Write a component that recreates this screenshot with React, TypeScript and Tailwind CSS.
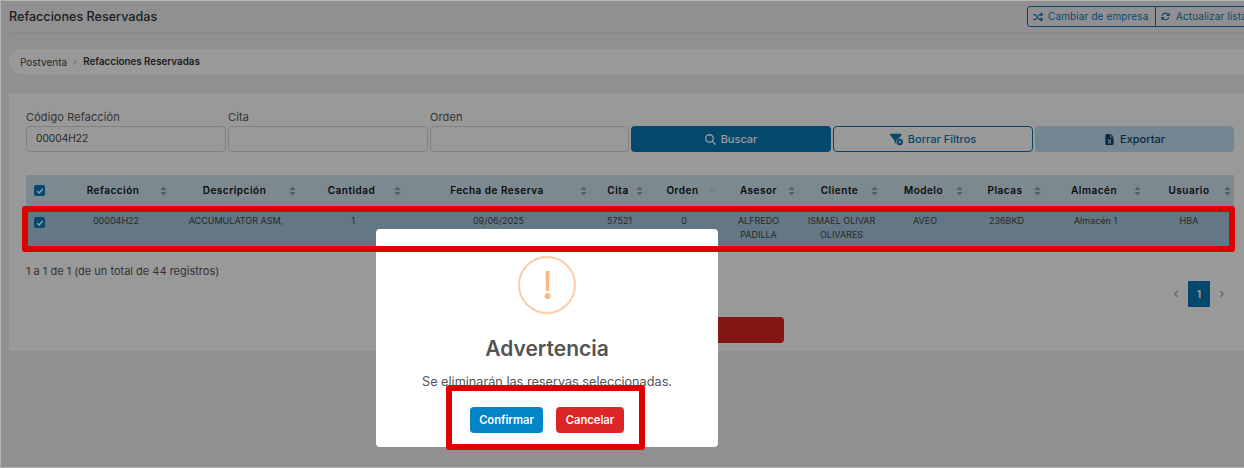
import { ChevronRight, ChevronUp, ChevronLeft } from "lucide-react";
import { FaArrowsRotate, FaFileExcel, FaFilterCircleXmark, FaMagnifyingGlass, FaShuffle } from "react-icons/fa6";

const gridCols = "grid grid-cols-[30px_114px_129px_105px_186px_56px_73px_79px_83px_85px_78px_100px_90px]";

const headers = [
  "Refacción",
  "Descripción",
  "Cantidad",
  "Fecha de Reserva",
  "Cita",
  "Orden",
  "Asesor",
  "Cliente",
  "Modelo",
  "Placas",
  "Almacén",
  "Usuario",
];

function SortIcon() {
  return (
    <svg width="7" height="10" viewBox="0 0 7 10" className="absolute right-[3px] top-[11px] fill-[#8a9aa5]">
      <path d="M3.5 0.5 6.5 4H0.5Z" />
      <path d="M3.5 9.5 0.5 6H6.5Z" />
    </svg>
  );
}

function Check({ className = "" }: { className?: string }) {
  return (
    <span className={`flex h-[11px] w-[11px] items-center justify-center rounded-[2px] bg-[#0878b8] ${className}`}>
      <svg width="8" height="8" viewBox="0 0 8 8" fill="none" stroke="white" strokeWidth="1.5">
        <path d="M1.2 4.2 3.2 6 6.8 2" />
      </svg>
    </span>
  );
}

function Field({ label, value, width = "w-[200px]" }: { label: string; value?: string; width?: string }) {
  return (
    <div className={width}>
      <p className="text-[11px] leading-[15px] text-[#555] tracking-[0.1px]">{label}</p>
      <div className="mt-[1px] flex h-[26px] items-center rounded-[4px] border border-[#d5d8dc] px-[9px] text-[10.2px] text-[#444]">
        {value}
      </div>
    </div>
  );
}

export default function App() {
  return (
    <div className="relative h-[468px] w-[1244px] overflow-hidden bg-[#f0f1f3] font-['Inter',sans-serif]">
      {/* Header */}
      <div className="ml-[9px] flex h-[33px] items-center justify-between border-b border-[#e2e4e7] pt-[1px]">
        <h1 className="mt-[2px] text-[12.6px] font-medium text-[#333]">Refacciones Reservadas</h1>
        <div className="-mr-[40px] flex h-[21px] w-[257px] rounded-[3px] border border-[#0878b8] text-[10px] tracking-[0.12px] text-[#0878b8]">
          <span className="flex w-[128px] items-center gap-[5px] border-r border-[#0878b8] pl-[5px] whitespace-nowrap">
            <FaShuffle size={10} />
            Cambiar de empresa
          </span>
          <span className="flex items-center gap-[6px] pl-[5px] whitespace-nowrap">
            <FaArrowsRotate size={9} />
            Actualizar lista
          </span>
        </div>
      </div>

      {/* Breadcrumb */}
      <div className="ml-[9px] mt-[16px] flex h-[25px] items-center gap-[3px] rounded-l-full bg-white pl-[11px] pt-[1px] text-[10px] text-[#444]">
        Postventa
        <ChevronRight size={10} className="text-[#999]" />
        <b className="text-[9.8px] font-semibold text-[#333]">Refacciones Reservadas</b>
      </div>

      {/* Card */}
      <div className="ml-[9px] mt-[19px] h-[258px] bg-white pl-[17px] pt-[17px]">
        <div className="flex items-end gap-[2px]">
          <Field label="Código Refacción" value="00004H22" />
          <Field label="Cita" />
          <Field label="Orden" width="w-[199px]" />
          <button className="flex h-[26px] w-[200px] items-center justify-center gap-[5px] rounded-[4px] bg-[#0878b8] text-[11px] font-medium text-white">
            <FaMagnifyingGlass size={11} />
            Buscar
          </button>
          <button className="flex h-[26px] w-[200px] items-center justify-center gap-[5px] rounded-[4px] border border-[#0878b8] text-[11px] font-medium text-[#0878b8]">
            <FaFilterCircleXmark size={13} />
            Borrar Filtros
          </button>
          <button className="flex h-[26px] w-[199px] items-center justify-center gap-[5px] rounded-[4px] bg-[#c2e0f4] text-[11px] font-medium text-[#12456b]">
            <FaFileExcel size={11} />
            Exportar
          </button>
        </div>

        {/* Table */}
        <div className="mt-[23px] w-[1208px]">
          <div className={`${gridCols} h-[32px] items-center bg-[#cfe4ee] pb-[1px]`}>
            <Check className="ml-[8px]" />
            {headers.map((h) => (
              <div key={h} className="relative flex h-[31px] items-center justify-center text-[10px] font-semibold tracking-[0.5px] whitespace-nowrap text-[#111]">
                {h}
                {h === "Orden" ? (
                  <ChevronUp size={10} className="absolute right-[2px] top-[10px] text-[#8a9aa5]" />
                ) : (
                  <SortIcon />
                )}
              </div>
            ))}
          </div>
          <div className={`${gridCols} h-[39px] items-start bg-[#a6c8dc] pt-[7px] text-center text-[9px] leading-[14px] text-[#444]`}>
            <Check className="ml-[8px] mt-[3px]" />
            <span className="pl-[6px]">00004H22</span>
            <span className="pl-[3px] whitespace-nowrap">ACCUMULATOR ASM,</span>
            <span className="pl-[3px]">1</span>
            <span className="pl-[3px]">09/06/2025</span>
            <span className="pl-[3px]">57521</span>
            <span className="pl-[3px]">0</span>
            <span className="px-[10px]">ALFREDO PADILLA</span>
            <span className="pl-[4px]">ISMAEL OLIVAR OLIVARES</span>
            <span className="pl-[3px]">AVEO</span>
            <span className="pl-[3px]">236BKD</span>
            <span className="pl-[3px]">Almacén 1</span>
            <span>HBA</span>
          </div>
        </div>

        <div className="mt-[17px] flex w-[1208px] items-start justify-between">
          <p className="text-[11px] leading-[16px] text-[#555]">1 a 1 de 1 (de un total de 44 registros)</p>
          <div className="mt-[18px] flex h-[26px] items-center gap-[7px] pr-[7px] text-[#aaa]">
            <ChevronLeft size={10} strokeWidth={3} />
            <span className="flex h-[26px] w-[22px] items-center justify-center bg-[#0878b8] text-[10px] font-bold text-white">1</span>
            <ChevronRight size={10} strokeWidth={3} />
          </div>
        </div>

        <div className="ml-[558px] mt-[10px] h-[26px] w-[200px] rounded-[4px] bg-[#dc2626]" />
      </div>

      {/* Scrim */}
      <div className="absolute inset-0 border-y border-l border-y-[#b4b4b4] border-l-[#b4b4b4] bg-black/40" />

      {/* Modal */}
      <div className="absolute left-[376px] top-[229px] flex h-[218px] w-[342px] flex-col items-center rounded-[4px] bg-white pt-[27px]">
        <div className="flex h-[58px] w-[58px] items-center justify-center rounded-full border-2 border-[#facea8]">
          <svg width="7" height="28" viewBox="0 0 7 28" className="fill-[#f8bb86]">
            <path d="M1.5 0h4l-.4 20H1.9Z" />
            <circle cx="3.5" cy="25" r="3" />
          </svg>
        </div>
        <h2 className="mt-[20px] text-[21px] font-semibold leading-[30px] text-[#545454]">Advertencia</h2>
        <p className="mt-[9px] text-[12.7px] leading-[18px] text-[#545454]">Se eliminarán las reservas seleccionadas.</p>
        <div className="mt-[16px] flex gap-[13px]">
          <button className="h-[26px] w-[73px] rounded-[4px] bg-[#0284c7] text-[11.2px] font-semibold text-white">Confirmar</button>
          <button className="h-[26px] w-[68px] rounded-[4px] bg-[#dc2626] text-[11.2px] font-semibold text-white">Cancelar</button>
        </div>
      </div>

      {/* Red annotations */}
      <div className="absolute left-[22px] top-[206px] h-[46px] w-[1213px] rounded-[3px] border-[6px] border-[#dc0000]" />
      <div className="absolute left-[446px] top-[385px] h-[65px] w-[199px] rounded-[3px] border-[6px] border-[#dc0000]" />
    </div>
  );
}
